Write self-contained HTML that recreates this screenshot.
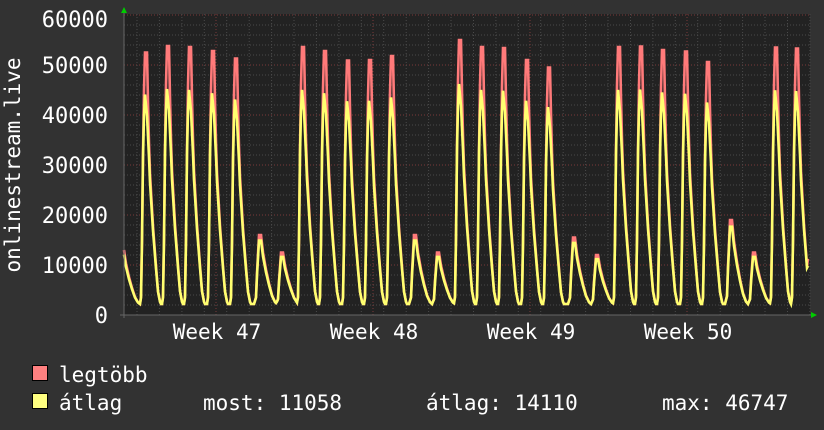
<!DOCTYPE html>
<html><head><meta charset="utf-8"><style>
body{margin:0;width:824px;height:430px;background:#323232;overflow:hidden}
svg{display:block}
text{font-family:"DejaVu Sans Mono","Liberation Mono",monospace;fill:#fff}
</style></head><body>
<svg id="g" width="824" height="430" xmlns="http://www.w3.org/2000/svg">
<rect x="124" y="14" width="686" height="301" fill="#222"/>
<g id="grid"></g>
<path id="red" fill="none" stroke="#ff7a7a" stroke-width="2.6"/>
<path id="yel" fill="none" stroke="#ffff70" stroke-width="2.6"/>
<line x1="120" y1="315" x2="812" y2="315" stroke="#666" stroke-width="1"/>
<line x1="124" y1="12" x2="124" y2="318" stroke="#666" stroke-width="1"/>
<polygon points="121,13 127,13 124,7" fill="#0c0"/>
<polygon points="811,312 811,318 817,315" fill="#0c0"/>
<g font-size="22" text-anchor="end">
<text x="108" y="323">0</text>
<text x="108" y="273">10000</text>
<text x="108" y="223">20000</text>
<text x="108" y="173">30000</text>
<text x="108" y="123">40000</text>
<text x="108" y="73">50000</text>
<text x="108" y="27">60000</text>
</g>
<text font-size="21" transform="translate(20,165) rotate(-90)" text-anchor="middle">onlinestream.live</text>
<g font-size="21" text-anchor="middle">
<text x="217" y="339">Week 47</text>
<text x="374" y="339">Week 48</text>
<text x="531" y="339">Week 49</text>
<text x="688" y="339">Week 50</text>
</g>
<rect x="32.5" y="365.5" width="15" height="15" fill="#ff8080" stroke="#000"/>
<rect x="32.5" y="393.5" width="15" height="15" fill="#ffff80" stroke="#000"/>
<g font-size="21">
<text x="59" y="382">legtöbb</text>
<text x="59" y="410">átlag</text>
<text x="203" y="410">most: 11058</text>
<text x="426" y="410">átlag: 14110</text>
<text x="662" y="410">max: 46747</text>
</g>
</svg>
<script>
var g=document.getElementById("grid"),h="";
for(var v=2000;v<=60000;v+=2000){var y=315-v/200;var maj=v%10000==0;
h+='<line x1="124" x2="810" y1="'+y+'" y2="'+y+'" stroke="'+(maj?'#7a3a3a':'#4a4a4a')+'" stroke-dasharray="1,2"/>';}
for(var x=137;x<810;x+=22.43){h+='<line y1="14" y2="315" x1="'+x.toFixed(1)+'" x2="'+x.toFixed(1)+'" stroke="#4a4a4a" stroke-dasharray="1,2"/>';}
[216,373,530,687].forEach(function(x){h+='<line y1="14" y2="315" x1="'+x+'" x2="'+x+'" stroke="#7a3a3a" stroke-dasharray="1,2"/>';});
g.innerHTML=h;
var peaks=[[123,13000],[146,52500],[168,53800],[190,53600],[213,52800],[236,51300],[260,16000],[282,12500],[303,53600],[325,52800],[348,50900],[370,51000],[392,51800],[415,16000],[438,12500],[460,55000],[482,53600],[504,53400],[527,51000],[549,49500],[574,15500],[597,12000],[619,53600],[641,53700],[663,53000],[686,52700],[708,50600],[731,19000],[754,12500],[776,53500],[797,53300]];
var bigR=[[-6,0],[-5,0.03],[-4,0.25],[-3,0.6],[-2,0.85],[-1,1],[1,1],[2,0.8],[3,0.64],[4,0.52],[7,0.31],[10,0.15],[12,0.05],[14,0.01],[15,0]];
var bigY=[[-6,0],[-5,0.03],[-4,0.3],[-3,0.7],[-2,0.9],[-1,1],[1,0.9],[2,0.8],[3,0.7],[4,0.58],[7,0.35],[10,0.17],[12,0.06],[14,0.01],[15,0]];
var sm=[[-6,0],[-4,0.1],[-3,0.45],[-1,1],[1,1],[3,0.75],[6,0.5],[9,0.3],[12,0.13],[15,0.03],[17,0]];
function interp(k,t){if(t<=k[0][0]||t>=k[k.length-1][0])return 0;for(var i=1;i<k.length;i++){if(t<=k[i][0]){var a=k[i-1],b=k[i];return a[1]+(b[1]-a[1])*(t-a[0])/(b[0]-a[0]);}}return 0;}
function val(x,f){var best=2200;for(var i=0;i<peaks.length;i++){var p=peaks[i][0],P=peaks[i][1];var small=P<25000;var t=x-p,v;
if(i==peaks.length-1&&t>10){v=2200+(f?P:P*0.84)*0.17;}
else if(small){var pk=f?P:P*0.93;v=2200+(pk-2200)*interp(sm,t);}
else{if(f)v=2200+(P-2200)*interp(bigR,t);else v=2200+(P*0.84-2200)*interp(bigY,t);}
if(v>best)best=v;}return best;}
function path(f){var d="";for(var x=124;x<=808;x+=1){var y=315-val(x,f)/200;d+=(x==124?"M":"L")+x+","+y.toFixed(1);}return d;}
document.getElementById("red").setAttribute("d",path(true));
document.getElementById("yel").setAttribute("d",path(false));
</script>
</body></html>
